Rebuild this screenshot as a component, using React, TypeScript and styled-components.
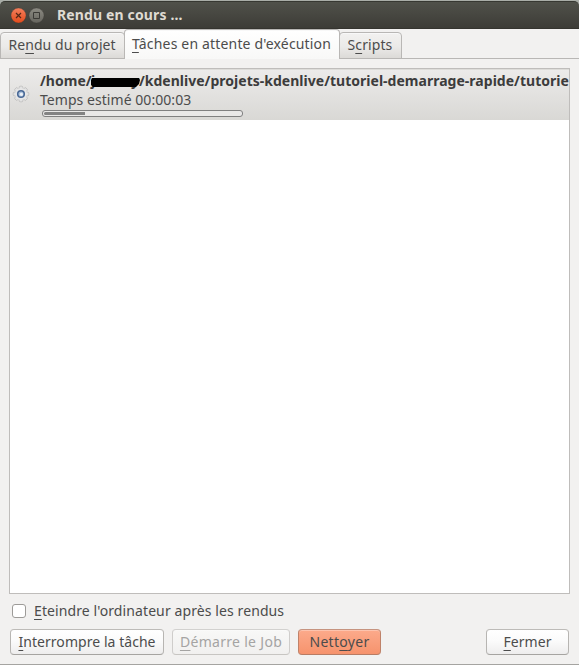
import React from 'react';
import styled, { createGlobalStyle } from 'styled-components';

const GlobalStyle = createGlobalStyle`
  * { box-sizing: border-box; }
  body { margin: 0; background: #c9cbc8; }
`;

const Window = styled.div`
  display: flex;
  flex-direction: column;
  width: 579px;
  height: 665px;
  overflow: hidden;
  background: #f2f1f0;
  border-bottom: 1px solid #a5a4a1;
  font: 14px/20px "Noto Sans", sans-serif;
  color: #4c4c4c;
  white-space: nowrap;
`;

const TitleFrame = styled.div`
  flex: none;
  height: 29px;
  padding-top: 1px;
  background: #a9ada7;
`;

const TitleBar = styled.header`
  display: flex;
  align-items: center;
  height: 28px;
  padding-left: 11px;
  border-top: 1px solid #373832;
  border-bottom: 1px solid #35342f;
  border-radius: 5px 5px 0 0;
  background: linear-gradient(#50514a, #3d3c37);
`;

const WindowButtons = styled.div`
  display: flex;
  gap: 2px;
  margin-right: 12px;
`;

const Title = styled.h1`
  margin: 0;
  font: bold 14px/20px "Noto Sans", sans-serif;
  letter-spacing: 0.14px;
  color: #dfdbd2;
`;

const TabBar = styled.nav`
  display: flex;
  align-items: flex-end;
  flex: none;
  height: 30px;
  background: linear-gradient(#b9b7b5, #b9b7b5) 0 100% / 100% 1px no-repeat;
`;

const Tab = styled.button<{ $active?: boolean; $width: number; $spacing: number }>`
  flex: none;
  width: ${p => p.$width}px;
  height: ${p => (p.$active ? 30 : 27)}px;
  padding: ${p => (p.$active ? '4px 0 0 7px' : '2px 0 0 7.5px')};
  border: 1px solid #b9b7b5;
  border-bottom-width: ${p => (p.$active ? 0 : 1)}px;
  border-radius: 4px 4px 0 0;
  background: ${p => (p.$active ? 'linear-gradient(#ffffff, #f8f8f7)' : 'linear-gradient(#f2f1f0, #ebeae8 55%, #dcdad7)')};
  box-shadow: inset 0 1px #f8f8f8;
  font: inherit;
  letter-spacing: ${p => p.$spacing}px;
  color: inherit;
  text-align: left;
  display: flex;
  align-items: flex-start;

  & + & { margin-left: -1px; }
`;

const Caption = styled.span`
  white-space: pre;
`;

const Mnemonic = styled.span`
  text-decoration: underline;
  text-decoration-thickness: 1px;
  text-underline-offset: 3px;
  text-decoration-skip-ink: none;
`;

const JobList = styled.main`
  flex: none;
  width: 561px;
  height: 526px;
  margin: 9px 0 0 9px;
  border: 1px solid #bfbdbb;
  background: #fff;
  overflow: hidden;
`;

const Job = styled.article`
  display: flex;
  height: 51px;
  padding-left: 2px;
  background: linear-gradient(#ecebea, #d9d8d5);
  box-shadow: inset 0 1px #dddcd9;
`;

const JobIcon = styled.svg`
  flex: none;
  width: 18px;
  height: 18px;
  margin: 16px 10px 0 0;
`;

const JobDetails = styled.div`
  display: flex;
  flex-direction: column;
  padding-top: 2px;
`;

const JobPath = styled.div`
  display: flex;
  height: 19px;
  font-weight: bold;
  letter-spacing: 0.02px;
  color: #3c3c3c;
`;

const HiddenName = styled.span`
  position: relative;
  display: flex;
  justify-content: space-between;
  width: 48px;
  margin-left: -0.7px;
`;

const Scribble = styled.svg`
  position: absolute;
  left: 0;
  top: 7px;
  width: 49px;
  height: 9px;
`;

const Estimate = styled.div`
  height: 20px;
  letter-spacing: 0.05px;
`;

const Progress = styled.div`
  width: 201px;
  height: 7px;
  margin-left: 2px;
  padding: 1px;
  border: 1px solid #808080;
  border-radius: 3px;
  background: #e9e8e7;
`;

const ProgressFill = styled.div`
  width: 41px;
  height: 3px;
  border-radius: 2px 0 0 2px;
  background: #838383;
`;

const ShutdownOption = styled.label`
  display: flex;
  align-items: center;
  height: 20px;
  margin: 7px 0 0 12px;
  letter-spacing: 0.1px;
`;

const Checkbox = styled.input`
  appearance: none;
  width: 14px;
  height: 14px;
  margin: 0 8px 0 0;
  border: 1px solid #9d9b98;
  border-radius: 3px;
  background: #fff;
`;

const Actions = styled.footer`
  display: flex;
  gap: 8px;
  height: 26px;
  margin: 8px 10px 0;
`;

const buttonLooks = {
  normal: { fill: 'linear-gradient(#ffffff, #fbfbfb 45%, #eeeded)', edge: '#bdbbb8 #b7b5b2 #a6a4a1', ink: '#4c4c4c' },
  disabled: { fill: 'linear-gradient(#f8f8f7, #f1f0ef)', edge: '#d2d1cf #cfcdcb #c7c5c2', ink: '#a5a4a3' },
  accent: { fill: 'linear-gradient(#fcaa8b, #f6936d)', edge: '#c69480 #bf8269 #b87c64', ink: '#4c4c4c' },
};

const ActionButton = styled.button<{ $look: keyof typeof buttonLooks; $width: number; $spacing: number }>`
  width: ${p => p.$width}px;
  height: 26px;
  padding: 0;
  border: 1px solid;
  border-color: ${p => buttonLooks[p.$look].edge};
  border-radius: 4px;
  background: ${p => buttonLooks[p.$look].fill};
  box-shadow: inset 0 1px rgba(255, 255, 255, 0.3);
  font: inherit;
  letter-spacing: ${p => p.$spacing}px;
  color: ${p => buttonLooks[p.$look].ink};

  &:last-child { margin-left: auto; }
`;

function Label({ before = '', accel, after }: { before?: string; accel: string; after: string }) {
  return <Caption>{before}<Mnemonic>{accel}</Mnemonic>{after}</Caption>;
}

const teeth = [0, 45, 90, 135, 180, 225, 270, 315];

export default function App() {
  return (
    <>
      <GlobalStyle />
      <Window>
        <TitleFrame>
          <TitleBar>
            <WindowButtons>
              <svg width="15" height="17" viewBox="0 0 15 17">
                <defs>
                  <linearGradient id="closeFill" x1="0" y1="0" x2="0" y2="1">
                    <stop stopColor="#f47f5c" /><stop offset="1" stopColor="#e24b1c" />
                  </linearGradient>
                </defs>
                <circle cx="7.5" cy="8.5" r="7.5" fill="url(#closeFill)" stroke="#35322d" strokeWidth=".3" />
                <path d="M5 6l5 5M10 6l-5 5" stroke="#542716" strokeWidth="1.2" />
              </svg>
              <svg width="17" height="17" viewBox="0 0 17 17">
                <defs>
                  <linearGradient id="maxFill" x1="0" y1="0" x2="0" y2="1">
                    <stop stopColor="#8c8b83" /><stop offset="1" stopColor="#66655e" />
                  </linearGradient>
                </defs>
                <circle cx="8.5" cy="8.5" r="7.5" fill="url(#maxFill)" stroke="#35342f" strokeWidth=".3" />
                <path d="M5.5 5.5h6v6h-6z" fill="none" stroke="#3b3a36" />
              </svg>
            </WindowButtons>
            <Title>Rendu en cours ...</Title>
          </TitleBar>
        </TitleFrame>
        <TabBar>
          <Tab $width={125} $spacing={0.06}><Label before="Re" accel="n" after="du du projet" /></Tab>
          <Tab $width={216} $spacing={0.17} $active><Label accel="T" after="âches en attente d'exécution" /></Tab>
          <Tab $width={63} $spacing={0.1}><Label before="S" accel="c" after="ripts" /></Tab>
        </TabBar>
        <JobList>
          <Job>
            <JobIcon viewBox="0 0 18 18">
              <g fill="#e2e2e2" stroke="#b2b2b2" strokeWidth=".6">
                {teeth.map(a => <rect key={a} x="7.2" y="1.2" width="3.6" height="4" rx="1" transform={`rotate(${a} 9 9)`} />)}
              </g>
              <circle cx="9" cy="9" r="6" fill="#e6e6e6" />
              <circle cx="9" cy="9" r="3.3" fill="#a9bfdb" stroke="#476794" strokeWidth="1.5" />
              <circle cx="9.4" cy="9.3" r="1.6" fill="#eef2f7" />
            </JobIcon>
            <JobDetails>
              <JobPath>
                <span>/home/</span>
                <HiddenName>
                  <span>j</span><span>y</span>
                  <Scribble viewBox="0 0 49 9">
                    <path d="M1 0h47l1 2-1 4-3 3H2L0 7V2z" fill="#000" />
                  </Scribble>
                </HiddenName>
                <span>/kdenlive/projets-kdenlive/tutoriel-demarrage-rapide/tutoriel</span>
              </JobPath>
              <Estimate>Temps estimé 00:00:03</Estimate>
              <Progress><ProgressFill /></Progress>
            </JobDetails>
          </Job>
        </JobList>
        <ShutdownOption>
          <Checkbox type="checkbox" />
          <Label accel="E" after="teindre l'ordinateur après les rendus" />
        </ShutdownOption>
        <Actions>
          <ActionButton $look="normal" $width={154} $spacing={0.05}><Label accel="I" after="nterrompre la tâche" /></ActionButton>
          <ActionButton $look="disabled" $width={118} $spacing={0.3} disabled><Label accel="D" after="émarre le Job" /></ActionButton>
          <ActionButton $look="accent" $width={83} $spacing={0.3}><Label before="Nett" accel="o" after="yer" /></ActionButton>
          <ActionButton $look="normal" $width={83} $spacing={0.05}><Label accel="F" after="ermer" /></ActionButton>
        </Actions>
      </Window>
    </>
  );
}
